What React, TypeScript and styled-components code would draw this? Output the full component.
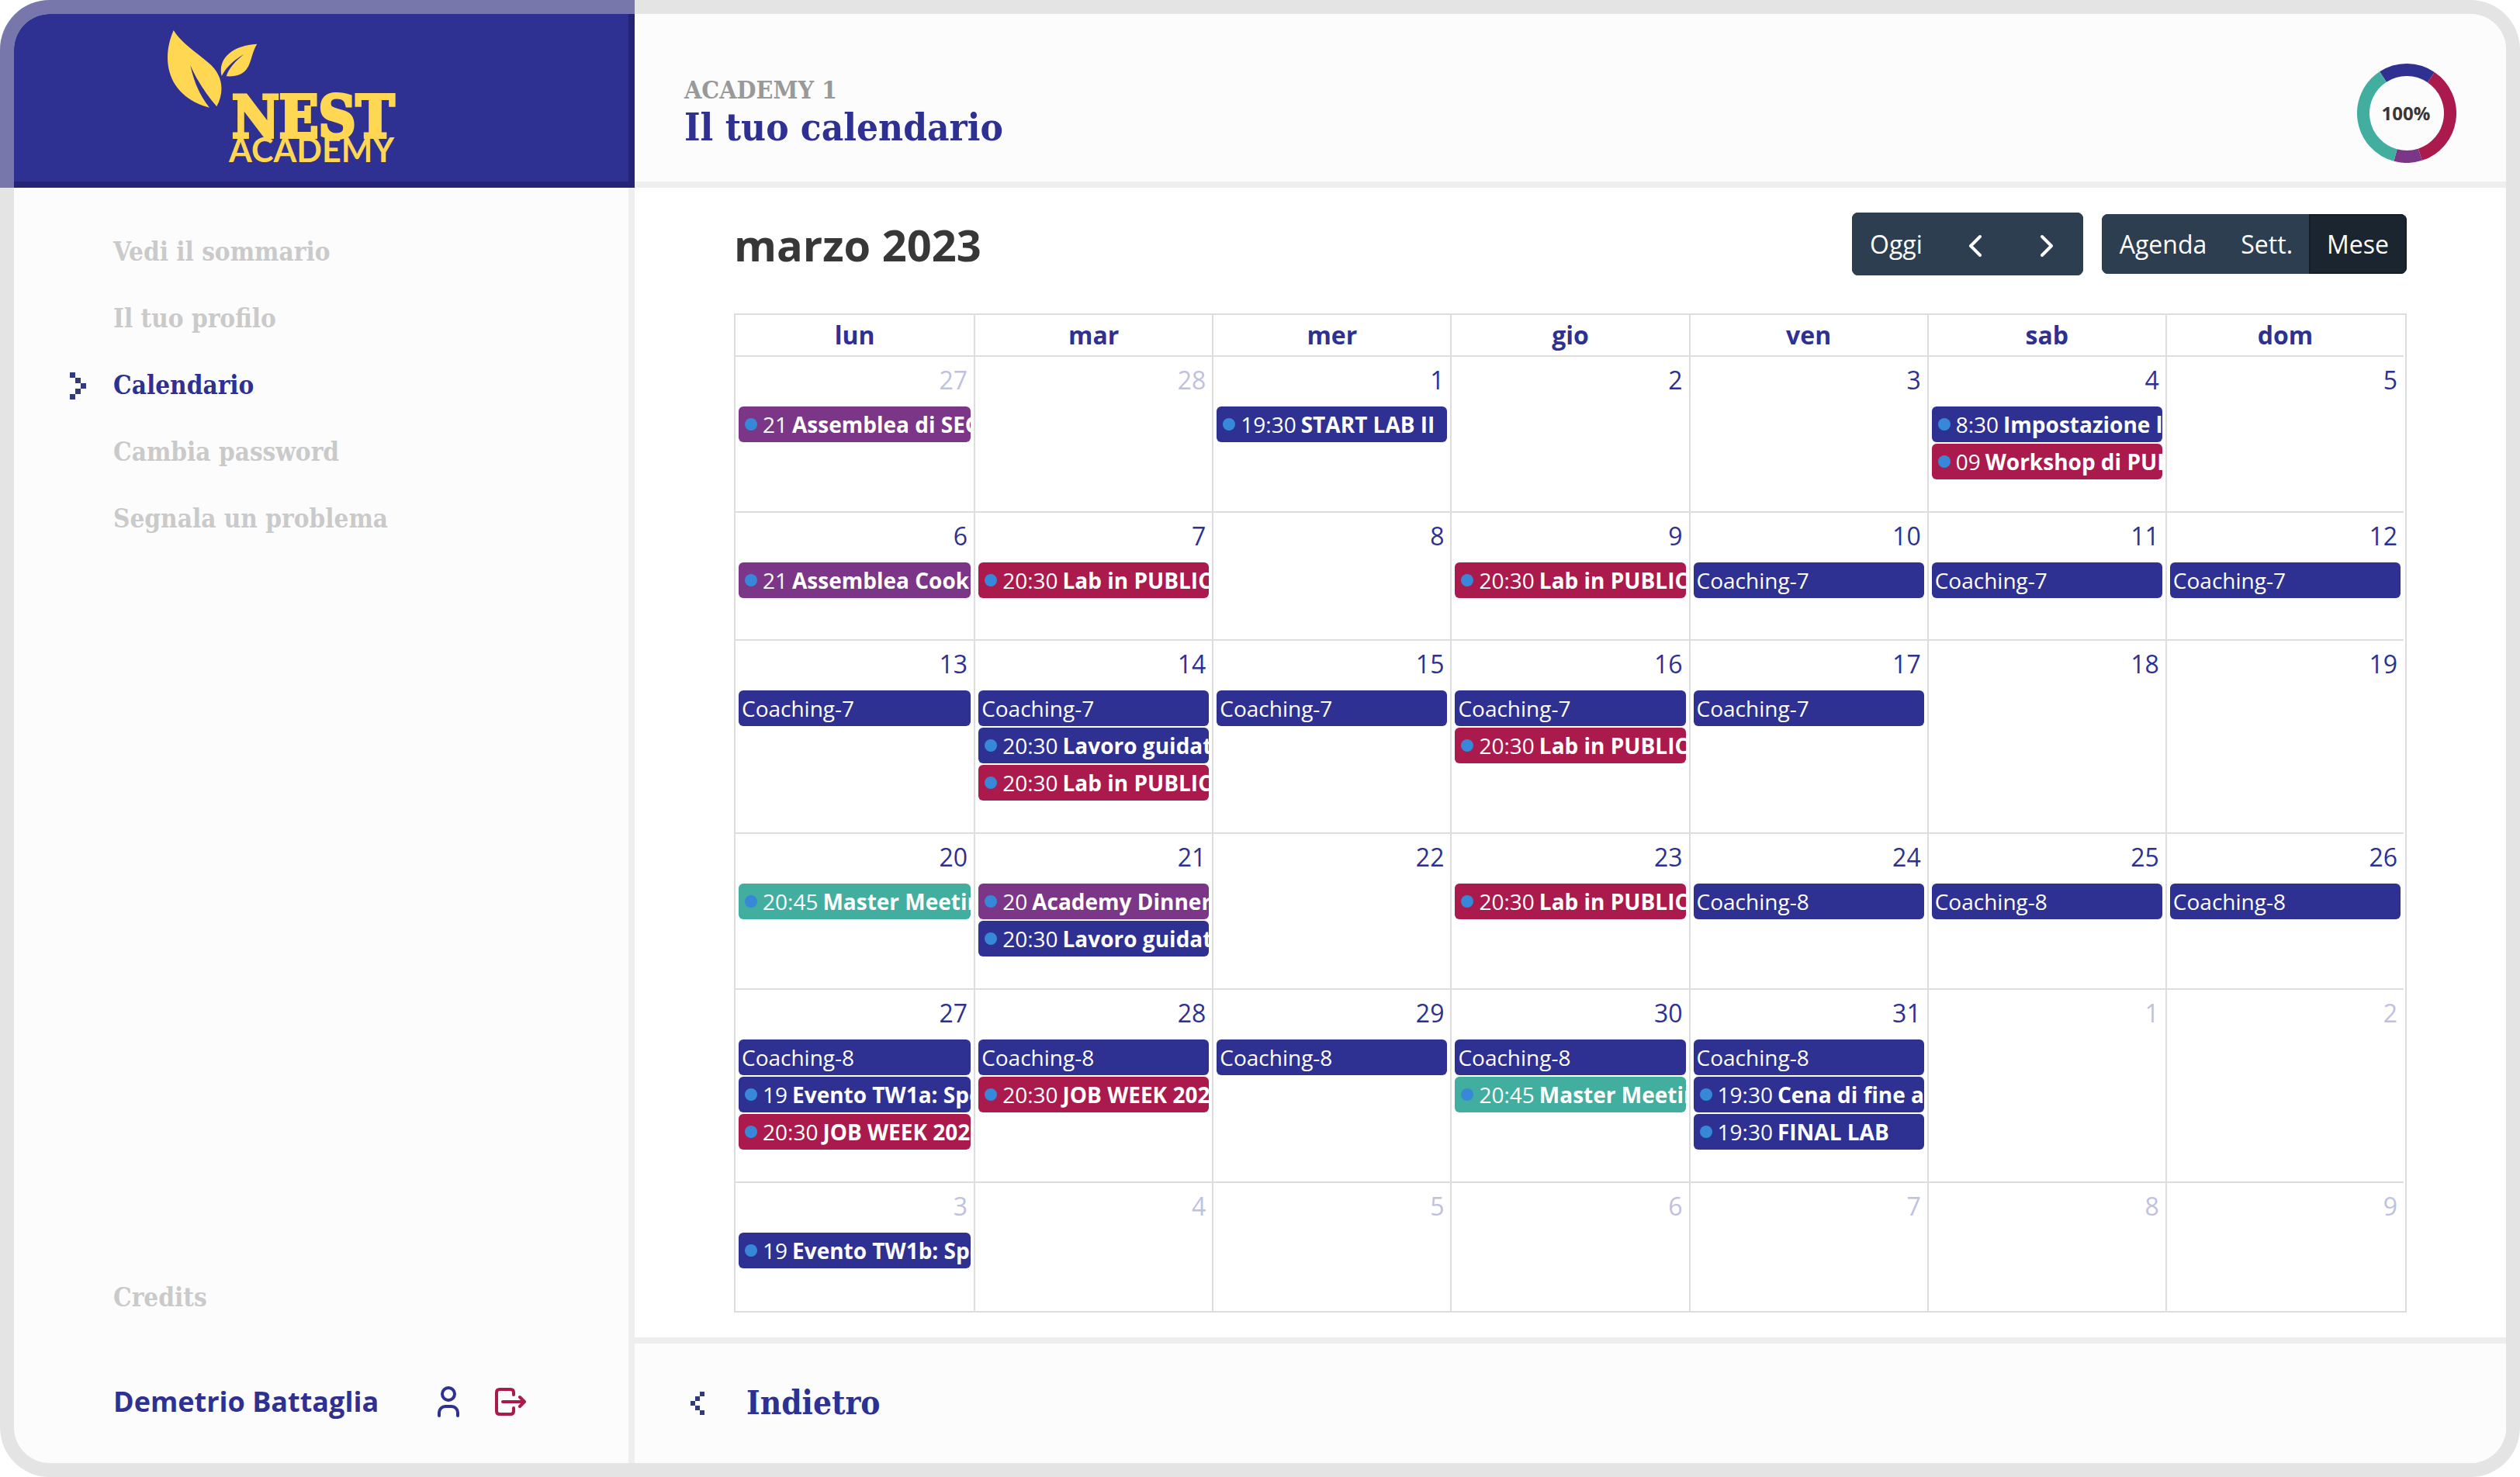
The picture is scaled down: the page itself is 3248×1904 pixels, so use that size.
import React from 'react';
import styled, { createGlobalStyle } from 'styled-components';

const slab = '"DejaVu Serif Condensed", "DejaVu Serif", serif';
const sans = '"Open Sans", "Noto Sans", sans-serif';

const color = {
  blue: '#2e3092',
  red: '#aa1a4c',
  purple: '#7b3687',
  teal: '#42ae9f',
  panel: '#fcfcfc',
  frame: '#e4e4e4',
  frameOnBlue: '#7777ab',
  rule: '#eeeeee',
  grid: '#dddddd',
  muted: '#cacaca',
  ink: '#373737',
};

const GlobalStyle = createGlobalStyle`
  *, *::before, *::after { box-sizing: border-box; }
  body { margin: 0; background: #fff; font-family: ${sans}; color: ${color.ink}; }
  button { font: inherit; cursor: pointer; }
  a { text-decoration: none; color: inherit; }
`;

const Frame = styled.div`
  display: flex;
  min-height: 100vh;
  padding: 18px;
  border-radius: 64px;
  background:
    linear-gradient(${color.frameOnBlue}, ${color.frameOnBlue}) 0 0 / 818px 242px no-repeat,
    ${color.frame};
`;

const Shell = styled.div`
  flex: 1;
  display: grid;
  grid-template-columns: 800px minmax(0, 1fr);
  border-radius: 46px;
  overflow: hidden;
`;

const Sidebar = styled.aside`
  display: flex;
  flex-direction: column;
  background: ${color.panel};
`;

const Brand = styled.div`
  height: 224px;
  padding: 20px 0 0 196px;
  background: ${color.blue};
  border-right: 8px solid #232475;
  border-bottom: 8px solid #232475;
`;

const SideBody = styled.div`
  flex: 1;
  display: flex;
  flex-direction: column;
  justify-content: space-between;
  padding-top: 40px;
  border-right: 8px solid ${color.rule};
`;

const Nav = styled.nav`
  display: flex;
  flex-direction: column;
`;

const NavLink = styled.a<{ $active?: boolean }>`
  display: flex;
  align-items: center;
  height: 86px;
  padding-left: 72px;
  font: bold 33px/48px ${slab};
  color: ${(p) => (p.$active ? color.blue : color.muted)};
`;

const Marker = styled.span`
  display: flex;
  width: 56px;
`;

const UserBar = styled.div`
  display: flex;
  align-items: center;
  height: 170px;
  padding: 12px 0 0 128px;
`;

const UserName = styled.span`
  width: 418px;
  font: bold 36px/56px ${sans};
  color: ${color.blue};
`;

const IconButton = styled.button`
  display: flex;
  padding: 0;
  margin-right: 46px;
  border: 0;
  background: none;
`;

const Main = styled.main`
  display: flex;
  flex-direction: column;
  background: #fff;
`;

const PageHeader = styled.header`
  display: flex;
  align-items: center;
  justify-content: space-between;
  height: 224px;
  padding: 40px 64px 0;
  background: ${color.panel};
  border-bottom: 8px solid ${color.rule};
`;

const Heading = styled.div`
  padding-bottom: 8px;
`;

const Eyebrow = styled.p`
  margin: 0;
  font: bold 32px/44px ${slab};
  color: #999;
`;

const Title = styled.h1`
  margin: 0;
  font: bold 49px/52px ${slab};
  color: ${color.blue};
`;

const Calendar = styled.section`
  flex: 1;
  padding: 32px 128px;
`;

const Toolbar = styled.div`
  display: flex;
  align-items: center;
  height: 81px;
  margin-bottom: 49px;
`;

const Month = styled.h2`
  flex: 1;
  margin: 0;
  font: bold 56px/80px ${sans};
`;

const Group = styled.div`
  display: flex;
  margin-left: 24px;
  border-radius: 8px;
  overflow: hidden;
`;

const ToolButton = styled.button<{ $active?: boolean; $tall?: boolean }>`
  display: flex;
  align-items: center;
  height: ${(p) => (p.$tall ? 81 : 77)}px;
  padding: 0 21px;
  border: 2px solid ${(p) => (p.$active ? '#151e27' : '#2c3e50')};
  background: ${(p) => (p.$active ? '#1a252f' : '#2c3e50')};
  color: #fff;
  font: 32px/48px ${sans};
  & + & { margin-left: -2px; }
`;

const GridBox = styled.div`
  padding-right: 2px;
  border: 2px solid ${color.grid};
`;

const Grid = styled.table`
  width: 100%;
  table-layout: fixed;
  border-collapse: separate;
  border-spacing: 0;
`;

const DayHead = styled.th`
  height: 52px;
  padding: 0;
  border-left: 2px solid ${color.grid};
  font: bold 32px/48px ${sans};
  color: ${color.blue};
  &:first-child { border-left: 0; }
`;

const Cell = styled.td`
  height: 165px;
  padding: 6px 4px 39px;
  vertical-align: top;
  border-left: 2px solid ${color.grid};
  border-top: 2px solid ${color.grid};
  &:first-child { border-left: 0; }
  tr:last-child > & { height: 167px; }
`;

const DayNumber = styled.a<{ $other: boolean }>`
  display: block;
  padding-right: 4px;
  margin-bottom: 10px;
  text-align: right;
  font: 32px/48px ${sans};
  color: ${(p) => (p.$other ? '#c0c1de' : color.blue)};
`;

const EventBar = styled.a<{ $bg: string; $timed: boolean }>`
  display: flex;
  align-items: center;
  height: 46px;
  margin-bottom: 2px;
  padding-left: ${(p) => (p.$timed ? 8 : 4)}px;
  border-radius: 6px;
  overflow: hidden;
  white-space: nowrap;
  background: ${(p) => p.$bg};
  color: #fff;
  font: 28px/46px ${sans};
`;

const Dot = styled.span`
  flex: none;
  width: 16px;
  height: 16px;
  margin-right: 7px;
  border-radius: 50%;
  background: #3788d8;
`;

const Time = styled.span`
  margin-right: 6px;
`;

const Footer = styled.footer`
  display: flex;
  align-items: center;
  height: 162px;
  padding: 0 64px 0 72px;
  background: ${color.panel};
  border-top: 8px solid ${color.rule};
`;

const BackLink = styled.a`
  display: flex;
  align-items: center;
  gap: 54px;
  font: bold 42px/56px ${slab};
  color: ${color.blue};
`;

const PixelArrow = ({ size, flip }: { size: number; flip?: boolean }) => (
  <svg width={size * 3} height={size * 5} viewBox="0 0 3 5" fill="#303a7c" shapeRendering="crispEdges">
    <g transform={flip ? 'matrix(-1 0 0 1 3 0)' : undefined}>
      <rect x="0" y="0" width="1" height="1" />
      <rect x="1" y="1" width="1" height="1" />
      <rect x="2" y="2" width="1" height="1" />
      <rect x="1" y="3" width="1" height="1" />
      <rect x="0" y="4" width="1" height="1" />
    </g>
  </svg>
);

const Logo = () => (
  <svg width="310" height="190" viewBox="214 38 310 190" fill="#ffd753" role="img" aria-label="Nest Academy">
    <path d="M223.700 39C234 56 254 68 270 82C285 95 291 115 279.300 137.300C266 122 254 104 245.300 84C250 106 258 124 270 138.700C236 130 216 106 216 74C216 62 219 50 223.700 39Z" />
    <path d="M331.300 56.700C302 58 280 74 285.700 98C292 86 302 77 314.300 70C303 79 295 88 291.700 98.300C318 100 321 84 324 75C326 68 328 62 331.300 56.700Z" />
    <text x="299" y="177" fontFamily={slab} fontWeight="bold" fontSize="74" stroke="#ffd753" strokeWidth="4">NEST</text>
    <text x="295" y="209" fontFamily="Lato, sans-serif" fontWeight="bold" fontSize="43">ACADEMY</text>
  </svg>
);

const arc = (from: number, to: number) => {
  const p = (deg: number) => {
    const a = (deg * Math.PI) / 180;
    return `${64 + 56 * Math.sin(a)} ${64 - 56 * Math.cos(a)}`;
  };
  return `M${p(from)}A56 56 0 0 1 ${p(to)}`;
};

const Progress = () => (
  <svg width="128" height="128" viewBox="0 0 128 128" fill="none" strokeWidth="16" role="img" aria-label="100%">
    <path d={arc(-33, 34)} stroke={color.blue} />
    <path d={arc(34, 162)} stroke={color.red} />
    <path d={arc(162, 195)} stroke={color.purple} />
    <path d={arc(195, 327)} stroke={color.teal} />
    <text x="63" y="73" textAnchor="middle" fontFamily={sans} fontWeight="bold" fontSize="24" fill={color.ink}>100%</text>
  </svg>
);

const Chevron = ({ flip }: { flip?: boolean }) => (
  <svg width="48" height="48" viewBox="0 0 48 48" fill="none" stroke="#fff" strokeWidth="4" strokeLinecap="round" strokeLinejoin="round">
    <path d={flip ? 'M18 14L30 26L18 38' : 'M30 14L18 26L30 38'} />
  </svg>
);

type Ev = { bg: string; title: string; time?: string };
const coaching = (n: number): Ev => ({ bg: color.blue, title: `Coaching-${n}` });
const lab: Ev = { bg: color.red, time: '20:30', title: 'Lab in PUBLIC' };
const guided: Ev = { bg: color.blue, time: '20:30', title: 'Lavoro guidato' };
const master: Ev = { bg: color.teal, time: '20:45', title: 'Master Meeting' };
const job: Ev = { bg: color.red, time: '20:30', title: 'JOB WEEK 2023' };

const weekdays = ['lun', 'mar', 'mer', 'gio', 'ven', 'sab', 'dom'];

const events: Record<number, Ev[]> = {
  0: [{ bg: color.purple, time: '21', title: 'Assemblea di SEGI' }],
  2: [{ bg: color.blue, time: '19:30', title: 'START LAB II' }],
  5: [
    { bg: color.blue, time: '8:30', title: 'Impostazione lavoro' },
    { bg: color.red, time: '09', title: 'Workshop di PUBLIC' },
  ],
  7: [{ bg: color.purple, time: '21', title: 'Assemblea Cooking' }],
  8: [lab],
  10: [lab],
  11: [coaching(7)],
  12: [coaching(7)],
  13: [coaching(7)],
  14: [coaching(7)],
  15: [coaching(7), guided, lab],
  16: [coaching(7)],
  17: [coaching(7), lab],
  18: [coaching(7)],
  21: [master],
  22: [{ bg: color.purple, time: '20', title: 'Academy Dinner' }, guided],
  24: [lab],
  25: [coaching(8)],
  26: [coaching(8)],
  27: [coaching(8)],
  28: [coaching(8), { bg: color.blue, time: '19', title: 'Evento TW1a: Speech' }, job],
  29: [coaching(8), job],
  30: [coaching(8)],
  31: [coaching(8), master],
  32: [
    coaching(8),
    { bg: color.blue, time: '19:30', title: 'Cena di fine anno' },
    { bg: color.blue, time: '19:30', title: 'FINAL LAB' },
  ],
  35: [{ bg: color.blue, time: '19', title: 'Evento TW1b: Speech' }],
};

const dayOf = (i: number) => new Date(2023, 1, 27 + i);

export default function App() {
  return (
    <>
      <GlobalStyle />
      <Frame>
        <Shell>
          <Sidebar>
            <Brand><Logo /></Brand>
            <SideBody>
              <Nav>
                {['Vedi il sommario', 'Il tuo profilo', 'Calendario', 'Cambia password', 'Segnala un problema'].map((label) => (
                  <NavLink key={label} href="#" $active={label === 'Calendario'}>
                    <Marker>{label === 'Calendario' && <PixelArrow size={7} />}</Marker>
                    {label}
                  </NavLink>
                ))}
              </Nav>
              <div>
                <NavLink href="#"><Marker />Credits</NavLink>
                <UserBar>
                  <UserName>Demetrio Battaglia</UserName>
                  <IconButton aria-label="Profilo">
                    <svg width="28" height="40" viewBox="0 0 28 40" fill="none" stroke={color.blue} strokeWidth="4" strokeLinecap="round">
                      <circle cx="14" cy="10" r="8" />
                      <path d="M2 38V34A8 8 0 0 1 10 26H18A8 8 0 0 1 26 34V38" />
                    </svg>
                  </IconButton>
                  <IconButton aria-label="Esci">
                    <svg width="40" height="36" viewBox="0 0 40 36" fill="none" stroke={color.red} strokeWidth="4" strokeLinecap="round" strokeLinejoin="round">
                      <path d="M24 9V6Q24 2 20 2H6Q2 2 2 6V30Q2 34 6 34H20Q24 34 24 30V26M10 18H37M32 12L38 18L32 24" />
                    </svg>
                  </IconButton>
                </UserBar>
              </div>
            </SideBody>
          </Sidebar>
          <Main>
            <PageHeader>
              <Heading>
                <Eyebrow>ACADEMY 1</Eyebrow>
                <Title>Il tuo calendario</Title>
              </Heading>
              <Progress />
            </PageHeader>
            <Calendar>
              <Toolbar>
                <Month>marzo 2023</Month>
                <Group>
                  <ToolButton $tall>Oggi</ToolButton>
                  <ToolButton $tall aria-label="Precedente"><Chevron /></ToolButton>
                  <ToolButton $tall aria-label="Successivo"><Chevron flip /></ToolButton>
                </Group>
                <Group>
                  <ToolButton>Agenda</ToolButton>
                  <ToolButton>Sett.</ToolButton>
                  <ToolButton $active>Mese</ToolButton>
                </Group>
              </Toolbar>
              <GridBox>
                <Grid>
                  <thead>
                    <tr>{weekdays.map((d) => <DayHead key={d} scope="col">{d}</DayHead>)}</tr>
                  </thead>
                  <tbody>
                    {[0, 1, 2, 3, 4, 5].map((week) => (
                      <tr key={week}>
                        {weekdays.map((d, col) => {
                          const i = week * 7 + col;
                          const date = dayOf(i);
                          return (
                            <Cell key={d}>
                              <DayNumber href="#" $other={date.getMonth() !== 2}>{date.getDate()}</DayNumber>
                              {(events[i] || []).map((e) => (
                                <EventBar key={e.title} href="#" $bg={e.bg} $timed={!!e.time}>
                                  {e.time && <><Dot /><Time>{e.time}</Time></>}
                                  {e.time ? <b>{e.title}</b> : e.title}
                                </EventBar>
                              ))}
                            </Cell>
                          );
                        })}
                      </tr>
                    ))}
                  </tbody>
                </Grid>
              </GridBox>
            </Calendar>
            <Footer>
              <BackLink href="#"><PixelArrow size={6} flip />Indietro</BackLink>
            </Footer>
          </Main>
        </Shell>
      </Frame>
    </>
  );
}
